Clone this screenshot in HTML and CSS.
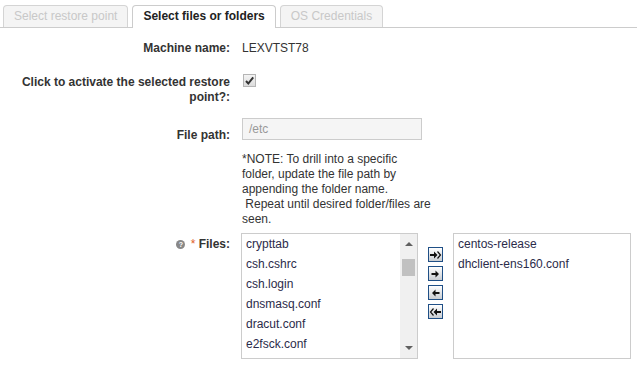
FILE: index.html
```html
<!DOCTYPE html>
<html lang="en">
<head>
  <meta charset="UTF-8" />
  <title>Restore files</title>
  <link rel="stylesheet" href="styles.css">
</head>
<body>
  <div class="tabs">
    <div class="tab disabled">Select restore point</div>
    <div class="tab active">Select files or folders</div>
    <div class="tab disabled">OS Credentials</div>
  </div>

  <div class="form">
    <div class="label row-machine">Machine name:</div>
    <div class="value row-machine">LEXVTST78</div>

    <div class="label row-activate">Click to activate the selected restore point?:</div>
    <div class="value row-activate">
      <span class="check">
        <svg width="11" height="11" viewBox="0 0 11 11"><path d="M2 6 L4.3 8.5 L9.2 2.3" fill="none" stroke="#333" stroke-width="2"/></svg>
      </span>
    </div>

    <div class="label row-path">File path:</div>
    <div class="value row-path">
      <div class="input">/etc</div>
    </div>

    <div class="label"></div>
    <div class="value note">*NOTE: To drill into a specific<br>folder, update the file path by<br>appending the folder name.<br>&nbsp;Repeat until desired folder/files are<br>seen.</div>

    <div class="label row-files">
      <span class="help">?</span>
      <span class="req">*</span> Files:
    </div>
    <div class="value row-files picker">
      <div class="listbox">
        <div class="items">
          <div class="item">crypttab</div>
          <div class="item">csh.cshrc</div>
          <div class="item">csh.login</div>
          <div class="item">dnsmasq.conf</div>
          <div class="item">dracut.conf</div>
          <div class="item">e2fsck.conf</div>
        </div>
        <div class="scrollbar">
          <span class="arrow up"></span>
          <span class="thumb"></span>
          <span class="arrow down"></span>
        </div>
      </div>

      <div class="movers">
        <span class="mover">
          <svg width="13" height="12" viewBox="0 0 13 12"><path d="M1 5h4V2.5L8.5 6 5 9.5V7H1z" fill="#111"/><path d="M8.5 2.5L11.5 6 8.5 9.5" fill="none" stroke="#111" stroke-width="1.2"/></svg>
        </span>
        <span class="mover">
          <svg width="13" height="12" viewBox="0 0 13 12"><path d="M2.5 5h4V2.5L10 6 6.5 9.5V7h-4z" fill="#111"/></svg>
        </span>
        <span class="mover">
          <svg width="13" height="12" viewBox="0 0 13 12"><path d="M10.5 5h-4V2.5L3 6l3.5 3.5V7h4z" fill="#111"/></svg>
        </span>
        <span class="mover">
          <svg width="13" height="12" viewBox="0 0 13 12"><path d="M12 5H8V2.5L4.5 6 8 9.5V7h4z" fill="#111"/><path d="M4.5 2.5L1.5 6 4.5 9.5" fill="none" stroke="#111" stroke-width="1.2"/></svg>
        </span>
      </div>

      <div class="listbox selected">
        <div class="items">
          <div class="item">centos-release</div>
          <div class="item">dhclient-ens160.conf</div>
        </div>
      </div>
    </div>
  </div>
</body>
</html>
```

FILE: styles.css
```css
body {
  margin: 0;
  font-family: "Liberation Sans", Arial, sans-serif;
  font-size: 12px;
  color: #333;
  background-color: #ffffff;
}

/* tab strip */
.tabs {
  display: flex;
  gap: 4px;
  width: 637px;
  box-sizing: border-box;
  padding: 5px 0 0 3px;
  border-bottom: 1px solid #ccc;
}

.tab {
  height: 21px;
  line-height: 21px;
  padding: 0 10px;
  border: 1px solid #d4d4d4;
  border-bottom: none;
  border-radius: 4px 4px 0 0;
  background-color: #f4f4f4;
  color: #c8c8c8;
}

.tab.active {
  background-color: #fff;
  color: #222;
  font-weight: bold;
  border-color: #ccc;
  height: 22px;
  margin-bottom: -1px;
}

/* form grid */
.form {
  display: grid;
  grid-template-columns: 215px auto;
  column-gap: 12px;
  padding-left: 15px;
  line-height: 15px;
}

.label {
  text-align: right;
  font-weight: bold;
  color: #333;
}

.value {
  color: #333;
}

.row-machine {
  margin-top: 13px;
}

.row-activate {
  margin-top: 19px;
}

.check {
  display: inline-flex;
  align-items: center;
  justify-content: center;
  width: 11px;
  height: 11px;
  margin: -1px 0 0 1px;
  border: 1px solid #b5b5b5;
  background: linear-gradient(#f4f4f4, #dcdcdc);
}

.label.row-path {
  margin-top: 23px;
}

.value.row-path {
  margin-top: 13px;
}

.input {
  width: 172px;
  height: 20px;
  line-height: 20px;
  padding-left: 6px;
  border: 1px solid #ccc;
  background-color: #f5f5f5;
  color: #999;
}

.note {
  margin-top: 9px;
  width: 200px;
}

.label.row-files {
  margin-top: 10px;
}

.value.row-files {
  margin-top: 6px;
}

.help {
  display: inline-block;
  width: 9px;
  height: 9px;
  border-radius: 50%;
  background-color: #888;
  color: #fff;
  font-size: 7px;
  line-height: 9px;
  text-align: center;
  vertical-align: 1px;
  margin-right: 2px;
}

.req {
  color: #e0602a;
  font-weight: normal;
}

/* file picker */
.picker {
  display: flex;
  align-items: flex-start;
  margin-left: -1px;
}

.listbox {
  display: flex;
  width: 175px;
  height: 124px;
  border: 1px solid #ccc;
  background-color: #fff;
}

.listbox.selected {
  width: 176px;
}

.items {
  flex: 1;
  overflow: hidden;
}

.item {
  height: 20px;
  line-height: 20px;
  padding-left: 4px;
  color: #2b2b4a;
}

.scrollbar {
  position: relative;
  width: 17px;
  background-color: #f0f0f0;
}

.arrow {
  position: absolute;
  left: 5px;
  width: 0;
  height: 0;
  border-left: 4px solid transparent;
  border-right: 4px solid transparent;
}

.arrow.up {
  top: 8px;
  border-bottom: 4px solid #606060;
}

.arrow.down {
  bottom: 8px;
  border-top: 4px solid #606060;
}

.thumb {
  position: absolute;
  top: 25px;
  left: 2px;
  width: 13px;
  height: 17px;
  background-color: #c1c1c1;
}

.movers {
  display: flex;
  flex-direction: column;
  gap: 4px;
  margin: 14px 10px 0 10px;
}

.mover {
  display: flex;
  align-items: center;
  justify-content: center;
  width: 13px;
  height: 13px;
  border: 1px solid #1f4f86;
  background: linear-gradient(#ffffff, #c9cdd2);
}
```
